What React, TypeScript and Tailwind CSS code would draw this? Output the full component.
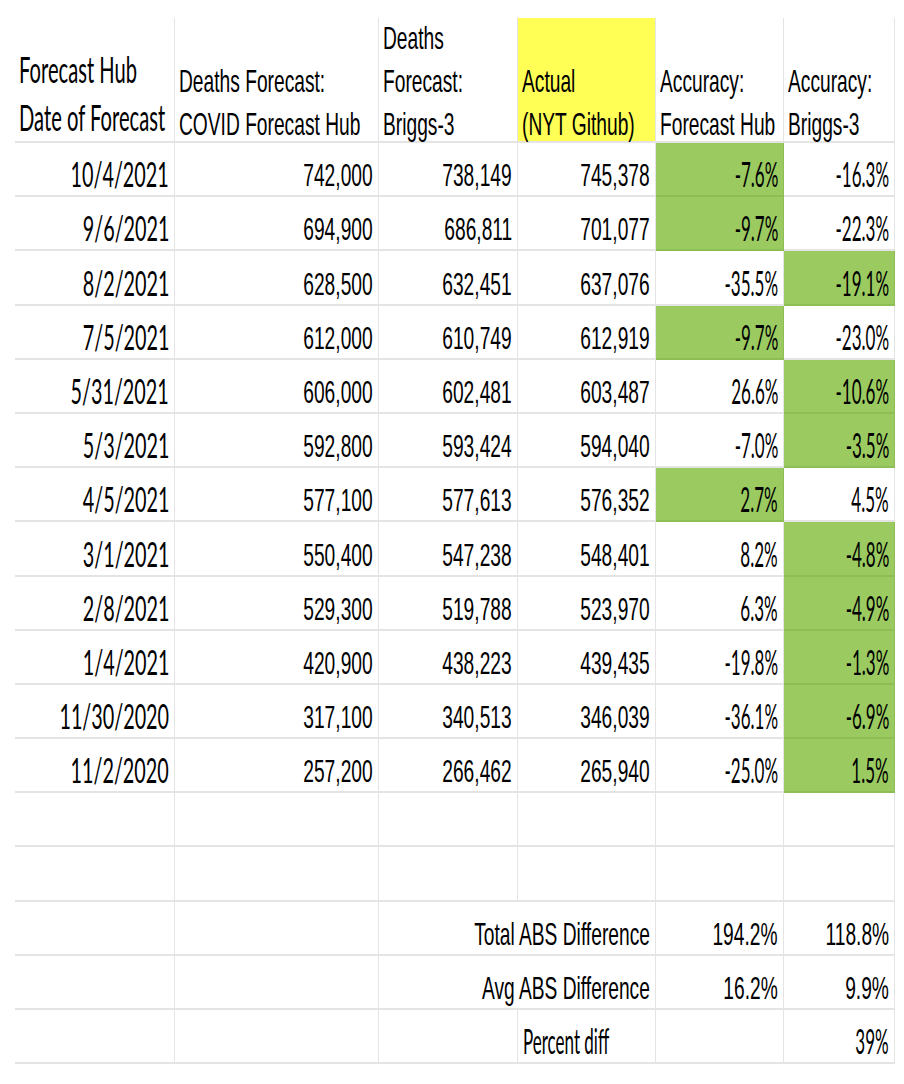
import clsx from 'clsx';

// One row of the forecast table
type Row = {
  date: string;
  hub: string;
  briggs: string;
  actual: string;
  accHub: string;
  accBriggs: string;
  hubBest?: boolean;
  briggsBest?: boolean;
};

const rows: Row[] = [
  { date: '10/4/2021', hub: '742,000', briggs: '738,149', actual: '745,378', accHub: '-7.6%', accBriggs: '-16.3%', hubBest: true },
  { date: '9/6/2021', hub: '694,900', briggs: '686,811', actual: '701,077', accHub: '-9.7%', accBriggs: '-22.3%', hubBest: true },
  { date: '8/2/2021', hub: '628,500', briggs: '632,451', actual: '637,076', accHub: '-35.5%', accBriggs: '-19.1%', briggsBest: true },
  { date: '7/5/2021', hub: '612,000', briggs: '610,749', actual: '612,919', accHub: '-9.7%', accBriggs: '-23.0%', hubBest: true },
  { date: '5/31/2021', hub: '606,000', briggs: '602,481', actual: '603,487', accHub: '26.6%', accBriggs: '-10.6%', briggsBest: true },
  { date: '5/3/2021', hub: '592,800', briggs: '593,424', actual: '594,040', accHub: '-7.0%', accBriggs: '-3.5%', briggsBest: true },
  { date: '4/5/2021', hub: '577,100', briggs: '577,613', actual: '576,352', accHub: '2.7%', accBriggs: '4.5%', hubBest: true },
  { date: '3/1/2021', hub: '550,400', briggs: '547,238', actual: '548,401', accHub: '8.2%', accBriggs: '-4.8%', briggsBest: true },
  { date: '2/8/2021', hub: '529,300', briggs: '519,788', actual: '523,970', accHub: '6.3%', accBriggs: '-4.9%', briggsBest: true },
  { date: '1/4/2021', hub: '420,900', briggs: '438,223', actual: '439,435', accHub: '-19.8%', accBriggs: '-1.3%', briggsBest: true },
  { date: '11/30/2020', hub: '317,100', briggs: '340,513', actual: '346,039', accHub: '-36.1%', accBriggs: '-6.9%', briggsBest: true },
  { date: '11/2/2020', hub: '257,200', briggs: '266,462', actual: '265,940', accHub: '-25.0%', accBriggs: '1.5%', briggsBest: true },
];

// The sheet was squeezed horizontally, so text is scaled on x
function Arial({ children }: { children: React.ReactNode }) {
  return (
    <span className="inline-block shrink-0 origin-right scale-x-[0.6] whitespace-nowrap font-['Liberation_Sans',Arial,sans-serif] text-[32px] leading-[32px]">
      {children}
    </span>
  );
}

function DateText({ children }: { children: React.ReactNode }) {
  return (
    <span className="inline-block shrink-0 origin-right scale-x-[0.565] whitespace-nowrap font-['Lato',sans-serif] text-[35px] leading-[35px]">
      {children}
    </span>
  );
}

function Pct({ children }: { children: React.ReactNode }) {
  return (
    <span className="inline-block shrink-0 origin-right scale-x-[0.5] whitespace-nowrap font-['Lato',sans-serif] text-[34px] leading-[34px]">
      {children}
    </span>
  );
}

function Cell({
  children,
  green,
  left,
  span2,
}: {
  children?: React.ReactNode;
  green?: boolean;
  left?: boolean;
  span2?: boolean;
}) {
  return (
    <div
      className={clsx(
        'flex h-[54.2px] items-end border-r border-b-2 pb-[4px]',
        left ? 'justify-start pl-[5px]' : 'justify-end pr-[5px]',
        green ? 'border-[#8dbd55] bg-[#9bcb60]' : 'border-[#e4e4e4]',
        span2 && 'col-span-2'
      )}
    >
      {children}
    </div>
  );
}

function Head({ children, yellow }: { children: React.ReactNode; yellow?: boolean }) {
  return (
    <div
      className={clsx(
        'flex h-[125px] flex-col justify-end border-r border-b-2 border-[#e4e4e4] pl-[4px]',
        yellow && 'bg-[#ffff55]'
      )}
    >
      {children}
    </div>
  );
}

function HeadArial({ lines }: { lines: string[] }) {
  return (
    <div className="-mb-[5px] flex flex-col">
      {lines.map(l => (
        <span
          key={l}
          className="origin-left scale-x-[0.6] whitespace-nowrap font-['Liberation_Sans',Arial,sans-serif] text-[32px] leading-[43px] text-black"
        >
          {l}
        </span>
      ))}
    </div>
  );
}

export default function App() {
  return (
    <div className="min-h-[1084px] w-[904px] bg-white pt-[18px] pl-[15px] text-black">
      <div className="grid grid-cols-[160px_204px_139px_138px_128px_111px]">
        {/* Header */}
        <Head>
          {['Forecast Hub', 'Date of Forecast'].map(l => (
            <span
              key={l}
              className="origin-left scale-x-[0.56] whitespace-nowrap font-['Lato',sans-serif] text-[36px] leading-[48px]"
            >
              {l}
            </span>
          ))}
        </Head>
        <Head>
          <HeadArial lines={['Deaths Forecast:', 'COVID Forecast Hub']} />
        </Head>
        <Head>
          <HeadArial lines={['Deaths', 'Forecast:', 'Briggs-3']} />
        </Head>
        <Head yellow>
          <HeadArial lines={['Actual', '(NYT Github)']} />
        </Head>
        <Head>
          <HeadArial lines={['Accuracy:', 'Forecast Hub']} />
        </Head>
        <Head>
          <HeadArial lines={['Accuracy:', 'Briggs-3']} />
        </Head>

        {/* Data rows */}
        {rows.map(r => (
          <div key={r.date} className="contents">
            <Cell><DateText>{r.date}</DateText></Cell>
            <Cell><Arial>{r.hub}</Arial></Cell>
            <Cell><Arial>{r.briggs}</Arial></Cell>
            <Cell><Arial>{r.actual}</Arial></Cell>
            <Cell green={r.hubBest}><Pct>{r.accHub}</Pct></Cell>
            <Cell green={r.briggsBest}><Pct>{r.accBriggs}</Pct></Cell>
          </div>
        ))}

        {/* Blank rows */}
        {[0, 1].map(i => (
          <div key={i} className="contents">
            <Cell /><Cell /><Cell /><Cell /><Cell /><Cell />
          </div>
        ))}

        {/* Summary */}
        <Cell /><Cell />
        <Cell span2><Arial>Total ABS Difference</Arial></Cell>
        <Cell><Arial>194.2%</Arial></Cell>
        <Cell><Arial>118.8%</Arial></Cell>

        <Cell /><Cell />
        <Cell span2><Arial>Avg ABS Difference</Arial></Cell>
        <Cell><Arial>16.2%</Arial></Cell>
        <Cell><Arial>9.9%</Arial></Cell>

        <Cell /><Cell /><Cell />
        <Cell left>
          <span className="inline-block shrink-0 origin-left scale-x-[0.5] whitespace-nowrap font-['Lato',sans-serif] text-[34px] leading-[34px]">
            Percent diff
          </span>
        </Cell>
        <Cell />
        <Cell><Pct>39%</Pct></Cell>
      </div>
    </div>
  );
}
